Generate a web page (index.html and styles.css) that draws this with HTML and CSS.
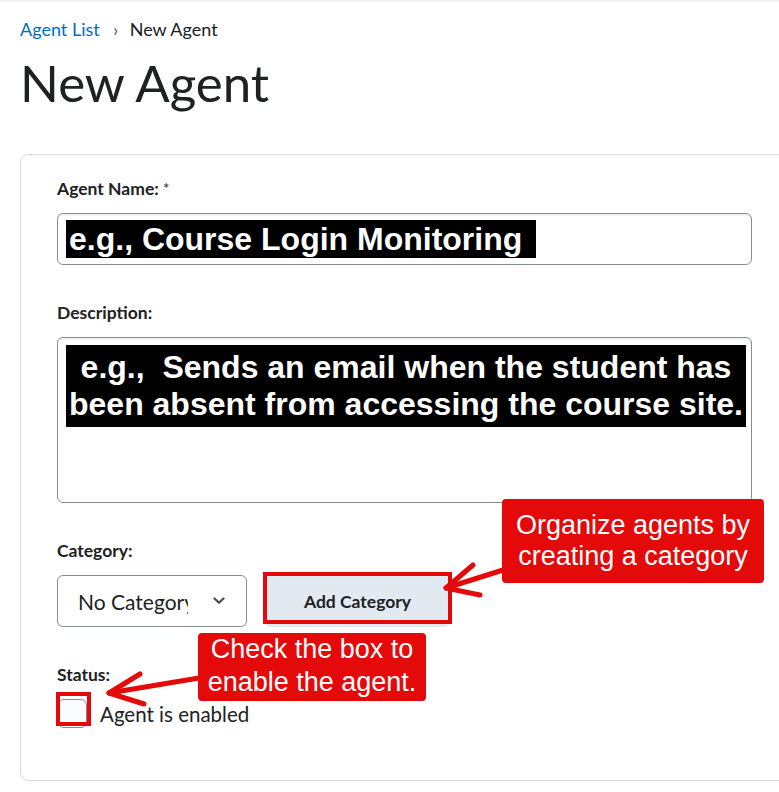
FILE: index.html
```html
<!DOCTYPE html>
<html lang="en">
<head>
    <meta charset="UTF-8">
    <meta name="viewport" content="width=device-width, initial-scale=1.0">
    <title>New Agent</title>
    <link rel="stylesheet" href="styles.css">
</head>
<body>
    <div class="topbar"></div>
    <main class="page">
        <nav class="crumbs">
            <a href="#" class="crumb-link">Agent List</a>
            <span class="crumb-sep">&rsaquo;</span>
            <span class="crumb-current">New Agent</span>
        </nav>

        <h1 class="title">New Agent</h1>

        <section class="card">
            <div class="field">
                <label class="label">Agent Name: <span class="req">*</span></label>
                <div class="input">
                    <span class="redact redact-name">e.g., Course Login Monitoring</span>
                </div>
            </div>

            <div class="field">
                <label class="label">Description:</label>
                <div class="textarea">
                    <div class="redact redact-desc">e.g.,&nbsp; Sends an email when the student has<br>been absent from accessing the course site.</div>
                </div>
            </div>

            <div class="field">
                <label class="label">Category:</label>
                <div class="category-row">
                    <div class="select">
                        <span class="select-text">No Category</span>
                        <svg class="chevron" width="12" height="8" viewBox="0 0 12 8">
                            <path d="M1.5 1.5 L6 5.8 L10.5 1.5" fill="none" stroke="#494c4e" stroke-width="2.2" stroke-linecap="round" stroke-linejoin="round"/>
                        </svg>
                    </div>
                    <div class="button-wrap">
                        <button class="button">Add Category</button>
                        <span class="mark mark-button"></span>
                    </div>
                </div>
            </div>

            <div class="field field-last">
                <label class="label">Status:</label>
                <div class="check-row">
                    <span class="check-wrap">
                        <span class="checkbox"></span>
                        <span class="mark mark-check"></span>
                    </span>
                    <span class="check-label">Agent is enabled</span>
                </div>
            </div>

            <!-- annotations drawn over the form -->
            <svg class="arrows" width="769" height="626" viewBox="0 0 769 626">
                <g fill="none" stroke="#e50a0a" stroke-width="5" stroke-linecap="round" stroke-linejoin="round">
                    <path d="M482 415 L425 433"/>
                    <path d="M452 410 L425 433 L459 440"/>
                    <path d="M178 523 L88 538"/>
                    <path d="M119 519 L88 538 L123 549"/>
                </g>
            </svg>
            <div class="callout callout-category">Organize agents by<br>creating a category</div>
            <div class="callout callout-status">Check the box to<br>enable the agent.</div>
        </section>
    </main>
</body>
</html>
```

FILE: styles.css
```css
body {
    margin: 0;
    background-color: #ffffff;
    color: #202122;
    font-family: Lato, "Open Sans", sans-serif;
    overflow: hidden;
}
.topbar {
    height: 2px;
    background-color: #f2f2f2;
}
.page {
    padding: 16px 0 0 20px;
}
.crumbs {
    font-size: 18px;
    line-height: 22px;
}
.crumb-link {
    color: #006fbf;
    text-decoration: none;
}
.crumb-sep {
    margin: 0 7px 0 9px;
    color: #494c4e;
    font-size: 17px;
}
.title {
    margin: 11px 0 0 0;
    font-size: 51px;
    font-weight: 400;
    line-height: 61px;
}
.card {
    position: relative;
    box-sizing: border-box;
    width: 769px;
    margin-top: 41px;
    padding: 23px 36px 52px 36px;
    border: 1px solid #dcdcdc;
    border-radius: 8px;
}
.field {
    margin-bottom: 37px;
}
.field-last {
    margin-bottom: 0;
}
.label {
    display: block;
    margin-bottom: 14px;
    font-size: 17.5px;
    font-weight: 700;
    line-height: 21px;
}
.req {
    font-weight: 400;
    font-size: 15px;
    vertical-align: top;
}
.input, .textarea {
    box-sizing: border-box;
    width: 695px;
    border: 1px solid #868c8f;
    border-radius: 6px;
    box-shadow: inset 0 2px 0 rgba(185, 194, 208, 0.2);
}
.input {
    height: 52px;
    padding: 6px 8px;
}
.textarea {
    height: 166px;
    padding: 7px 5px 0 8px;
}
.redact {
    background-color: #000000;
    color: #ffffff;
    font-family: "Liberation Sans", Arial, sans-serif;
    font-weight: 700;
    font-size: 32px;
}
.redact-name {
    display: inline-block;
    padding: 0 14px 0 3px;
    line-height: 38px;
}
.redact-desc {
    padding: 4px 0;
    line-height: 37px;
    text-align: center;
}
.category-row {
    display: flex;
    align-items: flex-start;
}
.select {
    box-sizing: border-box;
    display: flex;
    align-items: center;
    width: 190px;
    height: 52px;
    padding-left: 20px;
    border: 1px solid #868c8f;
    border-radius: 6px;
}
.select-text {
    width: 110px;
    overflow: hidden;
    white-space: nowrap;
    font-size: 21px;
}
.chevron {
    margin-left: 25px;
}
.button-wrap {
    position: relative;
    margin-left: 18px;
}
.button {
    width: 185px;
    height: 52px;
    border: none;
    border-radius: 6px;
    background-color: #e3e9f1;
    color: #202122;
    font-family: Lato, sans-serif;
    font-size: 17.5px;
    font-weight: 700;
}
.mark {
    position: absolute;
    box-sizing: border-box;
    border: 4px solid #e50a0a;
}
.mark-button {
    top: -3px;
    left: -2px;
    right: -2px;
    bottom: 3px;
}
.check-row {
    display: flex;
    align-items: center;
}
.check-wrap {
    position: relative;
    margin-left: 1px;
}
.checkbox {
    display: block;
    box-sizing: border-box;
    width: 29px;
    height: 29px;
    border: 1px solid #868c8f;
    border-radius: 6px;
    background-color: #f9fbff;
}
.mark-check {
    top: -7px;
    left: -2px;
    width: 35px;
    height: 34px;
}
.check-label {
    margin-left: 13px;
    font-size: 20.5px;
}
.arrows {
    position: absolute;
    top: 0;
    left: 0;
    pointer-events: none;
}
.callout {
    position: absolute;
    box-sizing: border-box;
    background-color: #e50a0a;
    color: #ffffff;
    border-radius: 4px;
    font-family: "Liberation Sans", Arial, sans-serif;
    font-size: 27px;
    text-align: center;
}
.callout-category {
    top: 344px;
    left: 481px;
    width: 262px;
    height: 84px;
    padding-top: 11px;
    line-height: 31px;
}
.callout-status {
    top: 478px;
    left: 177px;
    width: 228px;
    height: 68px;
    line-height: 33px;
}
```
